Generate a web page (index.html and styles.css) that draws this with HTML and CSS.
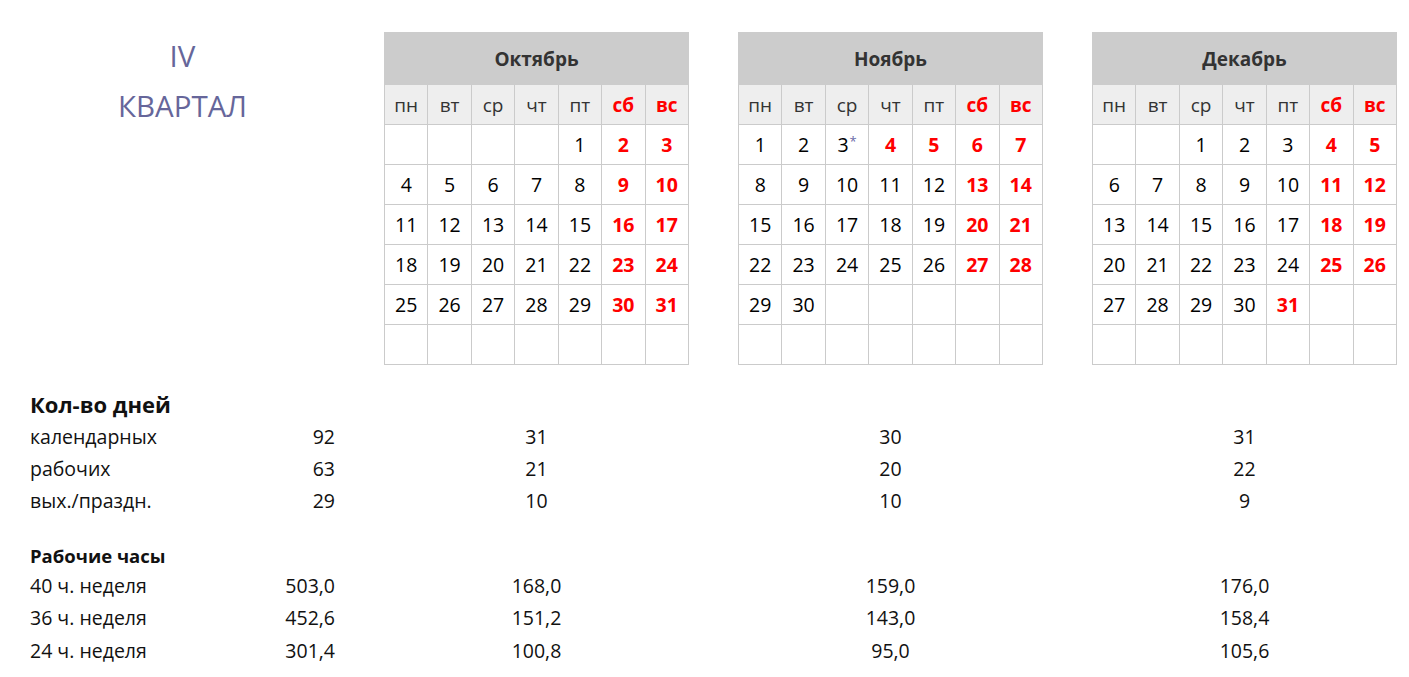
FILE: index.html
```html
<!DOCTYPE html>
<html lang="ru">
<head>
<meta charset="utf-8">
<link rel="stylesheet" href="styles.css">
</head>
<body>
<div class="page">
  <div class="top">
    <div class="title">
      <div class="roman">IV</div>
      <div class="kv">КВАРТАЛ</div>
    </div>
    <table class="cal">
      <tr><th colspan="7" class="month">Октябрь</th></tr>
      <tr class="wd"><td>пн</td><td>вт</td><td>ср</td><td>чт</td><td>пт</td><td class="we">сб</td><td class="we">вс</td></tr>
      <tr><td></td><td></td><td></td><td></td><td>1</td><td class="we">2</td><td class="we">3</td></tr>
      <tr><td>4</td><td>5</td><td>6</td><td>7</td><td>8</td><td class="we">9</td><td class="we">10</td></tr>
      <tr><td>11</td><td>12</td><td>13</td><td>14</td><td>15</td><td class="we">16</td><td class="we">17</td></tr>
      <tr><td>18</td><td>19</td><td>20</td><td>21</td><td>22</td><td class="we">23</td><td class="we">24</td></tr>
      <tr><td>25</td><td>26</td><td>27</td><td>28</td><td>29</td><td class="we">30</td><td class="we">31</td></tr>
      <tr><td></td><td></td><td></td><td></td><td></td><td></td><td></td></tr>
    </table>
    <table class="cal">
      <tr><th colspan="7" class="month">Ноябрь</th></tr>
      <tr class="wd"><td>пн</td><td>вт</td><td>ср</td><td>чт</td><td>пт</td><td class="we">сб</td><td class="we">вс</td></tr>
      <tr><td>1</td><td>2</td><td>3<span class="ast">*</span></td><td class="we">4</td><td class="we">5</td><td class="we">6</td><td class="we">7</td></tr>
      <tr><td>8</td><td>9</td><td>10</td><td>11</td><td>12</td><td class="we">13</td><td class="we">14</td></tr>
      <tr><td>15</td><td>16</td><td>17</td><td>18</td><td>19</td><td class="we">20</td><td class="we">21</td></tr>
      <tr><td>22</td><td>23</td><td>24</td><td>25</td><td>26</td><td class="we">27</td><td class="we">28</td></tr>
      <tr><td>29</td><td>30</td><td></td><td></td><td></td><td></td><td></td></tr>
      <tr><td></td><td></td><td></td><td></td><td></td><td></td><td></td></tr>
    </table>
    <table class="cal">
      <tr><th colspan="7" class="month">Декабрь</th></tr>
      <tr class="wd"><td>пн</td><td>вт</td><td>ср</td><td>чт</td><td>пт</td><td class="we">сб</td><td class="we">вс</td></tr>
      <tr><td></td><td></td><td>1</td><td>2</td><td>3</td><td class="we">4</td><td class="we">5</td></tr>
      <tr><td>6</td><td>7</td><td>8</td><td>9</td><td>10</td><td class="we">11</td><td class="we">12</td></tr>
      <tr><td>13</td><td>14</td><td>15</td><td>16</td><td>17</td><td class="we">18</td><td class="we">19</td></tr>
      <tr><td>20</td><td>21</td><td>22</td><td>23</td><td>24</td><td class="we">25</td><td class="we">26</td></tr>
      <tr><td>27</td><td>28</td><td>29</td><td>30</td><td class="we">31</td><td></td><td></td></tr>
      <tr><td></td><td></td><td></td><td></td><td></td><td></td><td></td></tr>
    </table>
  </div>

  <div class="stats">
    <div class="row head1"><div class="lbl">Кол-во дней</div></div>
    <div class="row"><div class="lbl">календарных</div><div class="q">92</div><div class="m">31</div><div class="m">30</div><div class="m">31</div></div>
    <div class="row"><div class="lbl">рабочих</div><div class="q">63</div><div class="m">21</div><div class="m">20</div><div class="m">22</div></div>
    <div class="row"><div class="lbl">вых./праздн.</div><div class="q">29</div><div class="m">10</div><div class="m">10</div><div class="m">9</div></div>
    <div class="row head2"><div class="lbl">Рабочие часы</div></div>
    <div class="row hr"><div class="lbl">40 ч. неделя</div><div class="q">503,0</div><div class="m">168,0</div><div class="m">159,0</div><div class="m">176,0</div></div>
    <div class="row hr"><div class="lbl">36 ч. неделя</div><div class="q">452,6</div><div class="m">151,2</div><div class="m">143,0</div><div class="m">158,4</div></div>
    <div class="row hr"><div class="lbl">24 ч. неделя</div><div class="q">301,4</div><div class="m">100,8</div><div class="m">95,0</div><div class="m">105,6</div></div>
  </div>
</div>
</body>
</html>
```

FILE: styles.css
```css
* { box-sizing: border-box; }
body {
  margin: 0;
  background: #ffffff;
  font-family: "Open Sans", "Noto Sans", sans-serif;
  color: #111;
}
.page {
  padding: 32px 0 0 30px;
}
.top {
  display: grid;
  grid-template-columns: 305px 305px 305px 305px;
  column-gap: 49px;
  align-items: start;
}
.title {
  text-align: center;
  color: #66669a;
  font-size: 29.5px;
  font-weight: 400;
  line-height: 1;
}
.roman { margin-top: 9px; }
.kv { margin-top: 20px; }

.cal {
  width: 305px;
  border-collapse: collapse;
  table-layout: fixed;
  font-size: 19.5px;
}
.cal td {
  height: 40px;
  border: 1px solid #cbcbcb;
  text-align: center;
  vertical-align: middle;
  padding: 0;
  color: #000;
}
.cal th.month {
  height: 52px;
  background: #cccccc;
  color: #333;
  font-weight: 700;
  font-size: 19px;
  border: 1px solid #cccccc;
}
.cal tr.wd td {
  background: #eeeeee;
  color: #333;
  font-size: 19px;
}
.cal td.we,
.cal tr.wd td.we {
  color: #ff0000;
  font-weight: 700;
}
.ast {
  color: #6b6ba8;
  font-size: 13px;
  vertical-align: 6px;
  margin-left: 1px;
}

.stats {
  margin-top: 23px;
}
.row {
  display: grid;
  grid-template-columns: 305px 305px 305px 305px;
  column-gap: 49px;
  height: 32px;
  align-items: center;
  font-size: 19.5px;
}
.row.hr {
  height: 32.5px;
}
.row .lbl {
  grid-column: 1;
  grid-row: 1;
}
.row .q {
  grid-column: 1;
  grid-row: 1;
  text-align: right;
}
.row .m {
  text-align: center;
  grid-row: 1;
}
.row .m:nth-child(3) { grid-column: 2; }
.row .m:nth-child(4) { grid-column: 3; }
.row .m:nth-child(5) { grid-column: 4; }
.head1 .lbl {
  font-size: 22px;
  font-weight: 700;
}
.head2 {
  margin-top: 26px;
  height: 27px;
}
.head2 .lbl {
  font-size: 18.5px;
  font-weight: 700;
}
```
